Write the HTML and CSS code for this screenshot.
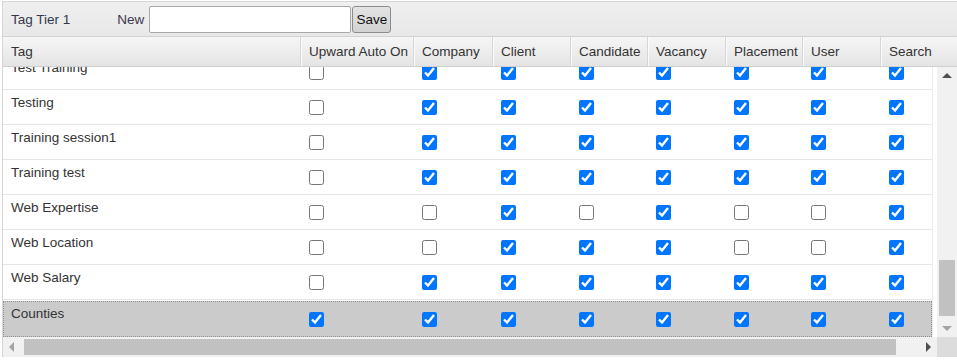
FILE: index.html
```html
<!DOCTYPE html>
<html lang="en">
<head>
    <meta charset="UTF-8">
    <title>Tag Tier 1</title>
    <link rel="stylesheet" href="styles.css">
</head>
<body>

<div class="grid-panel">
    <div class="toolbar">
        <span class="title">Tag Tier 1</span>
        <label class="new-label" for="newTag">New</label>
        <input type="text" id="newTag" class="new-input">
        <button class="save-btn">Save</button>
    </div>

    <div class="head cols">
        <div class="hcell">Tag</div>
        <div class="hcell">Upward Auto On</div>
        <div class="hcell">Company</div>
        <div class="hcell">Client</div>
        <div class="hcell">Candidate</div>
        <div class="hcell">Vacancy</div>
        <div class="hcell">Placement</div>
        <div class="hcell">User</div>
        <div class="hcell">Search</div>
    </div>

    <div class="body">
        <div class="viewport">
            <div class="rows">
                <div class="row cols">
                    <div class="cell name">Test Training</div>
                    <div class="cell"><input type="checkbox"></div>
                    <div class="cell"><input type="checkbox" checked></div>
                    <div class="cell"><input type="checkbox" checked></div>
                    <div class="cell"><input type="checkbox" checked></div>
                    <div class="cell"><input type="checkbox" checked></div>
                    <div class="cell"><input type="checkbox" checked></div>
                    <div class="cell"><input type="checkbox" checked></div>
                    <div class="cell"><input type="checkbox" checked></div>
                </div>
                <div class="row cols">
                    <div class="cell name">Testing</div>
                    <div class="cell"><input type="checkbox"></div>
                    <div class="cell"><input type="checkbox" checked></div>
                    <div class="cell"><input type="checkbox" checked></div>
                    <div class="cell"><input type="checkbox" checked></div>
                    <div class="cell"><input type="checkbox" checked></div>
                    <div class="cell"><input type="checkbox" checked></div>
                    <div class="cell"><input type="checkbox" checked></div>
                    <div class="cell"><input type="checkbox" checked></div>
                </div>
                <div class="row cols">
                    <div class="cell name">Training session1</div>
                    <div class="cell"><input type="checkbox"></div>
                    <div class="cell"><input type="checkbox" checked></div>
                    <div class="cell"><input type="checkbox" checked></div>
                    <div class="cell"><input type="checkbox" checked></div>
                    <div class="cell"><input type="checkbox" checked></div>
                    <div class="cell"><input type="checkbox" checked></div>
                    <div class="cell"><input type="checkbox" checked></div>
                    <div class="cell"><input type="checkbox" checked></div>
                </div>
                <div class="row cols">
                    <div class="cell name">Training test</div>
                    <div class="cell"><input type="checkbox"></div>
                    <div class="cell"><input type="checkbox" checked></div>
                    <div class="cell"><input type="checkbox" checked></div>
                    <div class="cell"><input type="checkbox" checked></div>
                    <div class="cell"><input type="checkbox" checked></div>
                    <div class="cell"><input type="checkbox" checked></div>
                    <div class="cell"><input type="checkbox" checked></div>
                    <div class="cell"><input type="checkbox" checked></div>
                </div>
                <div class="row cols">
                    <div class="cell name">Web Expertise</div>
                    <div class="cell"><input type="checkbox"></div>
                    <div class="cell"><input type="checkbox"></div>
                    <div class="cell"><input type="checkbox" checked></div>
                    <div class="cell"><input type="checkbox"></div>
                    <div class="cell"><input type="checkbox" checked></div>
                    <div class="cell"><input type="checkbox"></div>
                    <div class="cell"><input type="checkbox"></div>
                    <div class="cell"><input type="checkbox" checked></div>
                </div>
                <div class="row cols">
                    <div class="cell name">Web Location</div>
                    <div class="cell"><input type="checkbox"></div>
                    <div class="cell"><input type="checkbox"></div>
                    <div class="cell"><input type="checkbox" checked></div>
                    <div class="cell"><input type="checkbox" checked></div>
                    <div class="cell"><input type="checkbox" checked></div>
                    <div class="cell"><input type="checkbox"></div>
                    <div class="cell"><input type="checkbox"></div>
                    <div class="cell"><input type="checkbox" checked></div>
                </div>
                <div class="row cols">
                    <div class="cell name">Web Salary</div>
                    <div class="cell"><input type="checkbox"></div>
                    <div class="cell"><input type="checkbox" checked></div>
                    <div class="cell"><input type="checkbox" checked></div>
                    <div class="cell"><input type="checkbox" checked></div>
                    <div class="cell"><input type="checkbox" checked></div>
                    <div class="cell"><input type="checkbox" checked></div>
                    <div class="cell"><input type="checkbox" checked></div>
                    <div class="cell"><input type="checkbox" checked></div>
                </div>
                <div class="row cols selected">
                    <div class="cell name">Counties</div>
                    <div class="cell"><input type="checkbox" checked></div>
                    <div class="cell"><input type="checkbox" checked></div>
                    <div class="cell"><input type="checkbox" checked></div>
                    <div class="cell"><input type="checkbox" checked></div>
                    <div class="cell"><input type="checkbox" checked></div>
                    <div class="cell"><input type="checkbox" checked></div>
                    <div class="cell"><input type="checkbox" checked></div>
                    <div class="cell"><input type="checkbox" checked></div>
                </div>
            </div>
        </div>

        <!-- vertical scrollbar -->
        <div class="vscroll">
            <div class="sb-btn"><span class="arrow up"></span></div>
            <div class="vtrack"><div class="vthumb"></div></div>
            <div class="sb-btn"><span class="arrow down off"></span></div>
        </div>
    </div>

    <!-- horizontal scrollbar -->
    <div class="hbar">
        <div class="hscroll">
            <div class="sb-btn"><span class="arrow left off"></span></div>
            <div class="htrack"><div class="hthumb"></div></div>
            <div class="sb-btn"><span class="arrow right"></span></div>
        </div>
        <div class="corner"></div>
    </div>
</div>

</body>
</html>
```

FILE: styles.css
```css
* {
    margin: 0;
    padding: 0;
    box-sizing: border-box;
}

body {
    background: #fff;
    font-family: "Liberation Sans", Arial, sans-serif;
    font-size: 13.5px;
    color: #333;
}

/* Outer grid panel */
.grid-panel {
    margin: 1px 0 0 2px;
    border-top: 1px solid #d6d6d6;
    border-left: 1px solid #d6d6d6;
}

/* Toolbar */
.toolbar {
    height: 35px;
    display: flex;
    align-items: center;
    padding-left: 8px;
    background: linear-gradient(#efefef, #e8e8e8);
    border-bottom: 1px solid #d2d2d2;
}

.title {
    color: #33384a;
}

.new-label {
    margin-left: 47px;
    color: #3f3650;
}

.new-input {
    margin-left: 5px;
    width: 202px;
    height: 27px;
    border: 1px solid #a8a8a8;
    border-radius: 2px;
    background: #fff;
    font-family: inherit;
    font-size: 14px;
    padding: 0 4px;
}

.save-btn {
    margin-left: 1px;
    width: 39px;
    height: 27px;
    border: 1px solid #8c8c8c;
    border-radius: 3px;
    background: linear-gradient(#e4e4e4, #d2d2d2);
    font-family: inherit;
    font-size: 13.5px;
    color: #111;
}

/* Shared column template */
.cols {
    display: grid;
    grid-template-columns: 298px 113px 79px 78px 77px 78px 77px 78px 1fr;
}

/* Header row */
.head {
    height: 30px;
    background: linear-gradient(#f6f6f6, #e4e4e4);
    border-bottom: 1px solid #cfcfcf;
}

.hcell {
    display: flex;
    align-items: center;
    padding-left: 8px;
    border-right: 1px solid #d6d6d6;
    box-shadow: inset 1px 0 #fbfbfb;
    white-space: nowrap;
    overflow: hidden;
}

.hcell:first-child {
    box-shadow: none;
}

.hcell:last-child {
    border-right: none;
}

/* Body + scroll area */
.body {
    display: flex;
    height: 270px;
}

.viewport {
    width: 934px;
    overflow: hidden;
    background: #fff;
}

.rows {
    width: 930px;
    margin-top: -12px;
    border-right: 1px solid #ececec;
}

.row {
    height: 35px;
    border-bottom: 1px solid #e6e6e6;
}

.cell {
    padding-left: 8px;
    display: flex;
    align-items: center;
}

.cell.name {
    align-items: flex-start;
    padding-top: 5px;
    line-height: 16px;
    white-space: nowrap;
}

.cell input {
    width: 15px;
    height: 15px;
    margin: 0;
}

.row.selected {
    height: 36px;
    margin-top: 1px;
    background: #cbcbcb;
    border-bottom: none;
    outline: 1px dotted #8f8f8f;
    outline-offset: -1px;
}

/* Scrollbars */
.vscroll {
    width: 20px;
    display: flex;
    flex-direction: column;
    background: #f1f1f1;
}

.sb-btn {
    width: 17px;
    height: 17px;
    display: flex;
    align-items: center;
    justify-content: center;
    flex-shrink: 0;
}

.vscroll .sb-btn {
    width: 20px;
}

.vtrack {
    flex: 1;
    padding: 0 2px;
}

.vthumb {
    margin-top: 176px;
    height: 56px;
    background: #c1c1c1;
}

.hbar {
    display: flex;
    height: 20px;
}

.hscroll {
    width: 934px;
    display: flex;
    background: #f1f1f1;
}

.hscroll .sb-btn {
    height: 20px;
}

.htrack {
    flex: 1;
    padding: 2px 0;
}

.hthumb {
    margin-left: 4px;
    width: 872px;
    height: 16px;
    background: #c1c1c1;
}

.corner {
    width: 20px;
    background: #dcdcdc;
}

.arrow {
    width: 0;
    height: 0;
    border: 5px solid transparent;
}

.arrow.up {
    border-top-width: 0;
    border-bottom: 5px solid #505050;
}

.arrow.down {
    border-bottom-width: 0;
    border-top: 5px solid #505050;
}

.arrow.left {
    border-left-width: 0;
    border-right: 5px solid #505050;
}

.arrow.right {
    border-right-width: 0;
    border-left: 5px solid #505050;
}

.arrow.down.off {
    border-top-color: #a3a3a3;
}

.arrow.left.off {
    border-right-color: #a3a3a3;
}
```
